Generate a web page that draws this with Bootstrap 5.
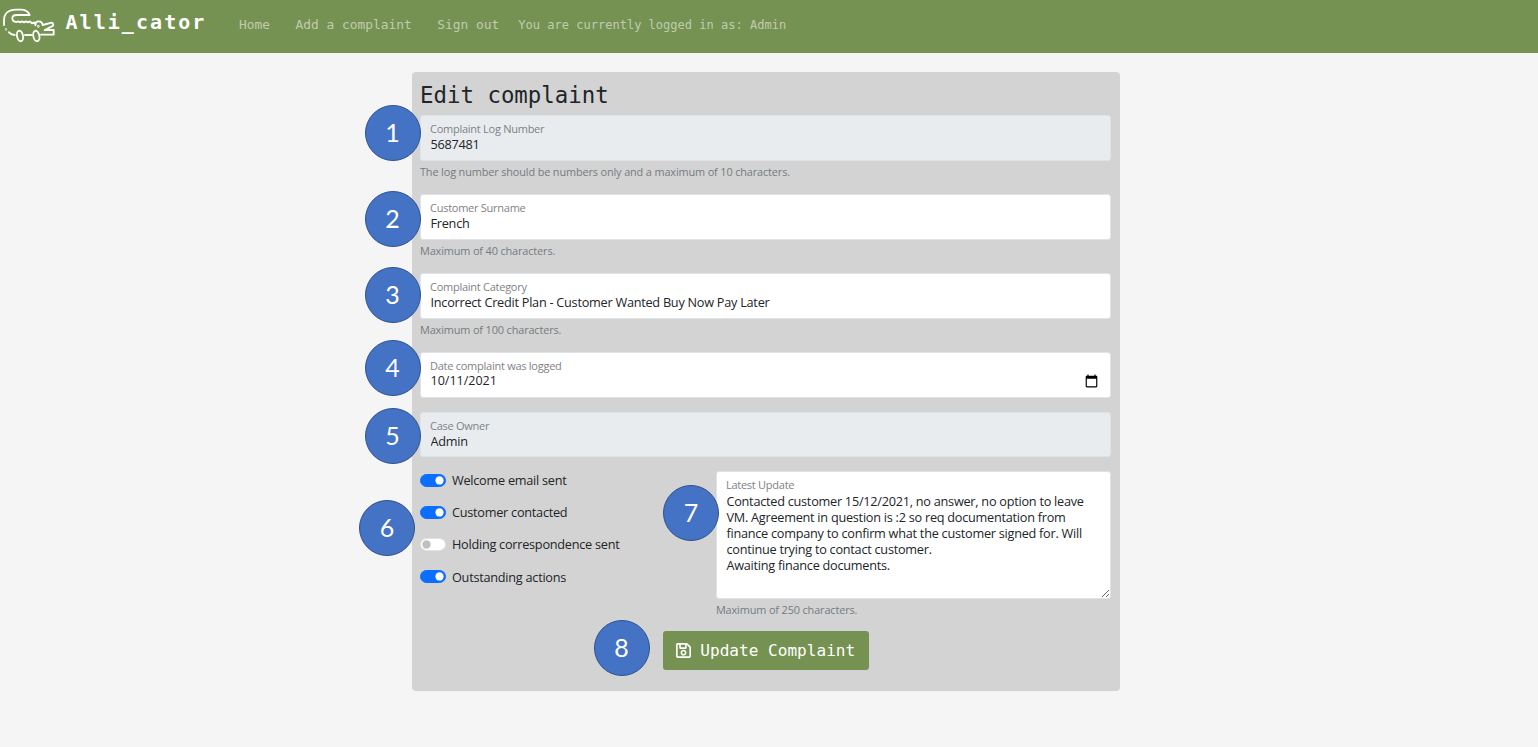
<!DOCTYPE html>
<html lang="en">
<head>
<meta charset="utf-8">
<meta name="viewport" content="width=device-width, initial-scale=1">
<title>Alli_cator - Edit complaint</title>
<link href="https://cdn.jsdelivr.net/npm/bootstrap@5.3.0/dist/css/bootstrap.min.css" rel="stylesheet">
<style>
html{font-size:12.88px}
body{background:#f5f5f5;font-family:"Open Sans","Noto Sans",sans-serif;color:#212529;overflow:hidden}
.mono{font-family:"DejaVu Sans Mono",monospace}
.topbar{background:#759252;height:53px;padding-bottom:5px}
.topbar .logo{margin-bottom:3.5px}
.topbar .navbar-brand{font-size:20px;line-height:26px;font-weight:700;letter-spacing:2.05px;color:#fff;margin:0 32.5px 0 9.5px;padding:0 0 4px}
.topbar .nav-link{font-size:12.88px;color:rgba(255,255,255,.55);padding:2px 0 0;margin-right:25.5px;line-height:20px}
.topbar .who{font-size:12.04px;color:rgba(255,255,255,.55);margin-left:-6.5px;line-height:20px;padding-top:1px}
.panel{width:708px;height:618.5px;margin:19px 0 0 412px;padding:8px 9px 8px 8px;background:#d3d3d3;border-radius:4px}
.panel h1{font-size:22.4px;line-height:30px;font-weight:400;margin:0 0 5px}
.form-floating>.form-control{height:45.5px;min-height:0;padding:20.6px 9.5px 6px;font-size:12.7px;letter-spacing:-.25px;line-height:16.1px;border-color:#dee3e8;border-width:.8px;border-radius:3px;background:#fff;color:#212529}
.form-floating>.form-control[readonly]{background:#e9ecef}
.form-floating>.form-control[type=date]{letter-spacing:0;font-size:12.5px}
.form-floating>.form-control::-webkit-calendar-picker-indicator{width:15px;height:15px;padding:0;margin-right:1.5px}
.form-floating>label{font-size:11px;letter-spacing:-.26px;transform:none!important;opacity:1!important;color:#7f8286!important;padding:6px 10px;line-height:16px;height:auto;border:0}
.form-floating>label::after{display:none}
.form-floating>textarea.form-control{height:127.5px;line-height:16.1px}
.hint{font-size:10.9px;letter-spacing:-.13px;line-height:16px;color:#747b82;margin-top:3.3px}
.group{height:79px}
.group-short{height:59.5px}
.form-switch{min-height:16px;margin:0 0 13.2px;height:19px;padding-left:32px}
.form-switch .form-check-input{width:25.8px;height:12.9px;margin:2.8px 0 0 -32px;border-width:.8px}
.form-check-label{font-size:12.7px;letter-spacing:-.25px;line-height:19px}
.save{background:#759252;color:#fff;width:206px;height:39px;font-size:16.08px;border-radius:3px;margin-top:13px}
.save:hover{background:#759252;color:#fff}
.save svg{margin-right:9.5px}
.save span{padding-top:2px}
.pin{position:absolute;width:56px;height:56px;border-radius:50%;background:#4472c4;border:1.4px solid #2f528f;color:#fff;font:25px/52.5px Lato,sans-serif;text-align:center;z-index:5}
.pin1{left:-47.5px;top:32.5px}.pin2{left:-47.5px;top:119px}.pin3{left:-47.5px;top:195px}.pin4{left:-47.5px;top:268px}
.pin5{left:-47.5px;top:335.5px}.pin6{left:-53px;top:428px}.pin7{left:251px;top:412.5px}.pin8{left:181.5px;top:548px}
</style>
</head>
<body>
<nav class="topbar d-flex align-items-center mono">
  <svg class="logo" width="56" height="45" viewBox="0 0 168 135" fill="none" stroke="#fff" stroke-width="5.5" stroke-linecap="round" stroke-linejoin="round" aria-hidden="true">
    <path d="M12 75V62C12 41 26 29 48 29h14c15 0 23 6 27 16H50c-8 0-13 4-13 10 0 8 6 11 13 11l5-2 5 3 6-3 6 3 6-3 6 3 6-3 6 6 7-3 4 5"/>
    <path d="M106 76c-1-9 4-12 10-12 7 0 11 4 12 11l27-7c7 2 6 9 1 11l-22 11h27v14h-38"/>
    <path d="M27 97c4 5 8 7 17 8M75 105h20"/>
    <ellipse cx="60" cy="108" rx="9" ry="16" transform="rotate(-12 60 108)"/>
    <ellipse cx="109" cy="108" rx="9" ry="16" transform="rotate(-12 109 108)"/>
    <circle cx="18" cy="88" r=".8"/><circle cx="115" cy="79" r="1.2"/>
  </svg>
  <a class="navbar-brand">Alli_cator</a>
  <a class="nav-link">Home</a>
  <a class="nav-link">Add a complaint</a>
  <a class="nav-link">Sign out</a>
  <span class="who">You are currently logged in as: Admin</span>
</nav>
<main class="panel position-relative">
  <h1 class="mono">Edit complaint</h1>
  <form>
    <div class="group">
      <div class="form-floating"><input id="log" class="form-control" value="5687481" readonly><label for="log">Complaint Log Number</label></div>
      <div class="hint">The log number should be numbers only and a maximum of 10 characters.</div>
    </div>
    <div class="group">
      <div class="form-floating"><input id="surname" class="form-control" value="French"><label for="surname">Customer Surname</label></div>
      <div class="hint">Maximum of 40 characters.</div>
    </div>
    <div class="group">
      <div class="form-floating"><input id="category" class="form-control" value="Incorrect Credit Plan - Customer Wanted Buy Now Pay Later"><label for="category">Complaint Category</label></div>
      <div class="hint">Maximum of 100 characters.</div>
    </div>
    <div class="group-short">
      <div class="form-floating"><input id="date" type="date" class="form-control" value="2021-10-11"><label for="date">Date complaint was logged</label></div>
    </div>
    <div class="group-short">
      <div class="form-floating"><input id="owner" class="form-control" value="Admin" readonly><label for="owner">Case Owner</label></div>
    </div>
    <div class="row">
      <div class="col-5">
        <div class="form-check form-switch"><input class="form-check-input" type="checkbox" id="s1" checked><label class="form-check-label" for="s1">Welcome email sent</label></div>
        <div class="form-check form-switch"><input class="form-check-input" type="checkbox" id="s2" checked><label class="form-check-label" for="s2">Customer contacted</label></div>
        <div class="form-check form-switch"><input class="form-check-input" type="checkbox" id="s3"><label class="form-check-label" for="s3">Holding correspondence sent</label></div>
        <div class="form-check form-switch"><input class="form-check-input" type="checkbox" id="s4" checked><label class="form-check-label" for="s4">Outstanding actions</label></div>
      </div>
      <div class="col-7">
        <div class="form-floating"><textarea id="update" class="form-control">Contacted customer 15/12/2021, no answer, no option to leave VM. Agreement in question is :2 so req documentation from finance company to confirm what the customer signed for. Will continue trying to contact customer.
Awaiting finance documents.</textarea><label for="update">Latest Update</label></div>
        <div class="hint">Maximum of 250 characters.</div>
      </div>
    </div>
    <div class="text-center">
      <button type="button" class="btn save mono d-inline-flex align-items-center justify-content-center p-0"><svg width="15" height="17" viewBox="0 0 448 512" fill="currentColor" aria-hidden="true"><path d="M433.941 129.941l-83.882-83.882A48 48 0 0 0 316.118 32H48C21.49 32 0 53.49 0 80v352c0 26.51 21.49 48 48 48h352c26.51 0 48-21.49 48-48V163.882a48 48 0 0 0-14.059-33.941zM272 80v80H144V80h128zm122 352H54a6 6 0 0 1-6-6V86a6 6 0 0 1 6-6h42v104c0 13.255 10.745 24 24 24h176c13.255 0 24-10.745 24-24V83.882l78.243 78.243a6 6 0 0 1 1.757 4.243V426a6 6 0 0 1-6 6zM224 232c-48.523 0-88 39.477-88 88s39.477 88 88 88 88-39.477 88-88-39.477-88-88-88zm0 128c-22.056 0-40-17.944-40-40s17.944-40 40-40 40 17.944 40 40-17.944 40-40 40z"/></svg><span>Update Complaint</span></button>
    </div>
  </form>
  <span class="pin pin1">1</span><span class="pin pin2">2</span><span class="pin pin3">3</span><span class="pin pin4">4</span>
  <span class="pin pin5">5</span><span class="pin pin6">6</span><span class="pin pin7">7</span><span class="pin pin8">8</span>
</main>
<script src="https://cdn.jsdelivr.net/npm/bootstrap@5.3.0/dist/js/bootstrap.bundle.min.js"></script>
</body>
</html>
